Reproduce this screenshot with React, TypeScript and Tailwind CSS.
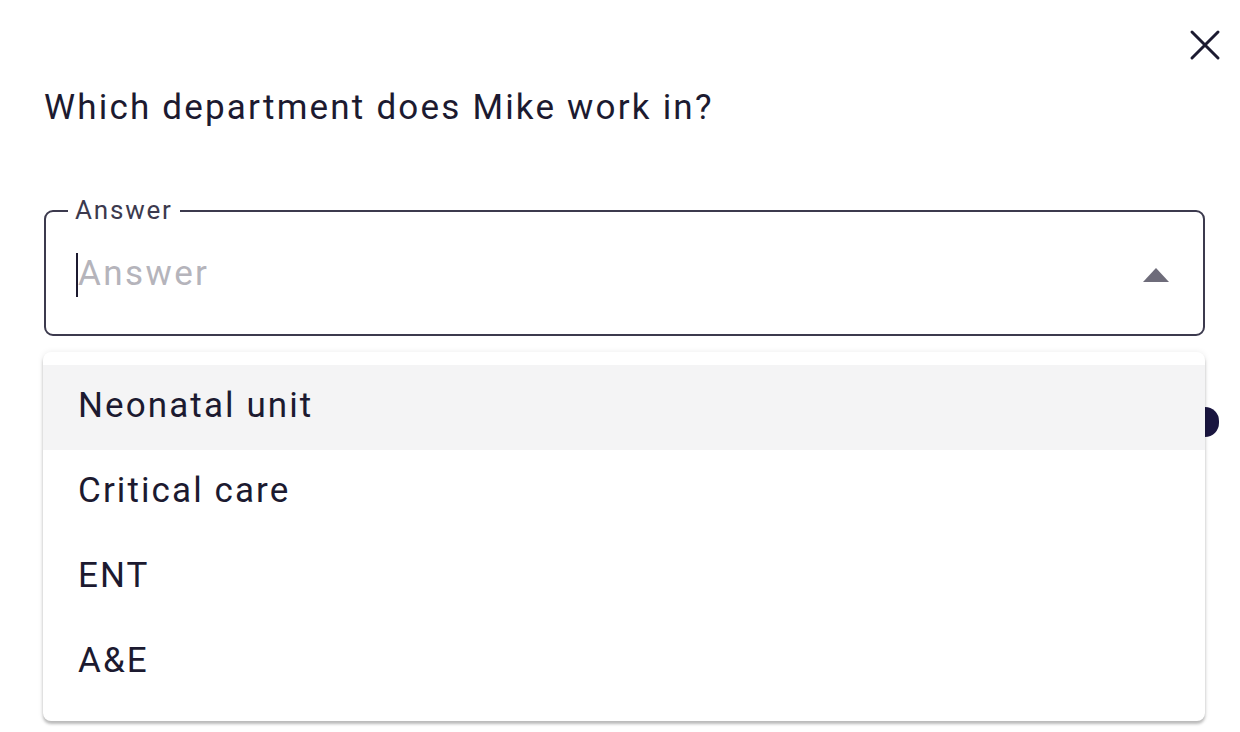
import React from 'react';

const options = ['Neonatal unit', 'Critical care', 'ENT', 'A&E'];

export default function App() {
  return (
    <div
      className="relative w-[1240px] h-[732px] overflow-hidden bg-white text-[#1c1a30]"
      style={{ fontFamily: 'Roboto, "Noto Sans", sans-serif' }}
    >
      {/* close */}
      <button className="absolute left-[1188px] top-[28px] w-[34px] h-[34px] flex items-center justify-center">
        <svg width="32" height="32" viewBox="0 0 32 32" fill="none">
          <path d="M3 3L29 29M29 3L3 29" stroke="#1c1a30" strokeWidth="3" strokeLinecap="round" />
        </svg>
      </button>

      <div className="flex flex-col pl-[44px] pr-[35px] pt-[86px]">
        <h2 className="text-[35px] leading-[44px] font-normal tracking-[2.2px]">
          Which department does Mike work in?
        </h2>

        {/* outlined field */}
        <div className="relative mt-[80px] h-[126px] rounded-[9px] border-2 border-[#3c3a4e]">
          <span className="absolute left-[22px] -top-[18px] bg-white px-[7px] text-[26px] leading-[32px] tracking-[1.8px] text-[#3c3a4e]">
            Answer
          </span>
          <div className="flex h-full items-center pl-[30px] pr-[34px] pt-[3px]">
            <span className="w-[2px] h-[44px] bg-[#1c1a30]" />
            <span className="text-[35px] tracking-[2.4px] text-[#b5b4bb]">Answer</span>
            <span className="ml-auto">
              <svg width="26" height="14" viewBox="0 0 26 14">
                <path d="M0 14L13 0L26 14Z" fill="#6e6c7a" />
              </svg>
            </span>
          </div>
        </div>

        {/* menu */}
        <div className="relative mt-[16px] -ml-[1px] w-[1162px]">
          <div className="absolute left-[1148px] top-[55px] w-[28px] h-[30px] rounded-full bg-[#1a1640]" />
          <div className="relative rounded-[8px] bg-white pt-[13px] pb-[16px] shadow-[0_3px_3px_rgba(0,0,0,0.25),0_0_6px_rgba(0,0,0,0.08)]">
            {options.map((o, i) => (
              <div
                key={o}
                className={`flex h-[85px] items-center pl-[35px] pb-[2px] text-[35px] tracking-[2.1px] ${i === 0 ? 'bg-[#f4f4f5]' : ''}`}
              >
                {o}
              </div>
            ))}
          </div>
        </div>
      </div>
    </div>
  );
}
